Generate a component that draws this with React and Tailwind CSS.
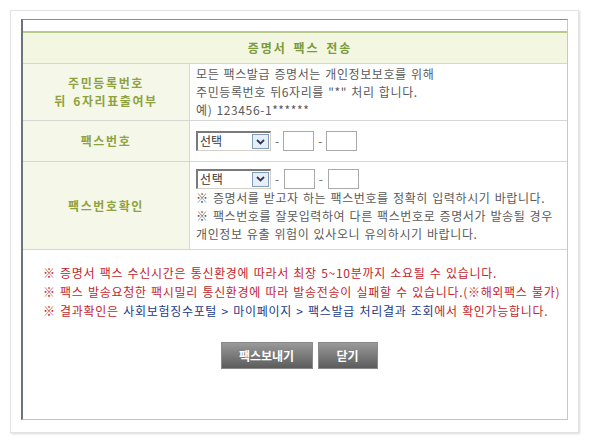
import React from 'react';

const FONT = { fontFamily: '"Noto Sans CJK KR", "Noto Sans", sans-serif' };

const FakeSelect = () => (
    <div className="flex h-[20px] w-[75px] items-stretch border-t-2 border-l-2 border-t-[#7a7a7a] border-l-[#7a7a7a] border-b border-r border-b-[#d4d0c8] border-r-[#d4d0c8] bg-white">
        <span className="flex-1 pl-[2px] text-[12px] leading-[16px] text-[#333]">선택</span>
        <span className="m-[1px] flex w-[17px] items-center justify-center border border-[#7f9db9] bg-[#e8eef7]">
            <svg width="9" height="6" viewBox="0 0 9 6">
                <path d="M1 1 L4.5 4.5 L8 1" stroke="#2b3a55" strokeWidth="1.8" fill="none" />
            </svg>
        </span>
    </div>
);

const Box = () => <div className="h-[20px] w-[31px] border border-[#a9a9a9] bg-white" />;

const Dash = () => <span className="px-[4px] text-[12px] text-[#666]">-</span>;

const Label = ({ children }) => (
    <div className="flex w-[167px] flex-col items-center justify-center border-r border-[#d6d6d6] bg-[#f5f8e8] text-center text-[12px] font-bold leading-[18px] tracking-[1.6px] text-[#8ea23f] [word-spacing:2px]">
        {children}
    </div>
);

const App = () => {
    return (
        <div className="min-h-[441px] w-[589px] bg-white pl-[10px] pt-[10px]" style={FONT}>
            <div className="h-[423px] w-[569px] border border-[#e3e3e3] pb-[12px] pl-[10px] pr-[10px] pt-[8px] shadow-[1px_1px_2px_rgba(0,0,0,0.15)]">
                <div className="flex h-[401px] w-[547px] flex-col border-b border-l-2 border-r border-t border-b-[#c4c4c4] border-l-[#6e727c] border-r-[#c8c8c8] border-t-[#888b93] bg-white">
                    <div className="h-[11px]" />
                    {/* header */}
                    <div className="flex h-[33px] items-center justify-center border-b border-t-2 border-b-[#d6d6d6] border-t-[#b9cb8c] bg-[#f3f7e2] pl-[10px] text-[12px] font-bold tracking-[2px] text-[#7b9a3c] [word-spacing:2px]">
                        증명서 팩스 전송
                    </div>

                    {/* row 1 */}
                    <div className="flex h-[57px] border-b border-[#d6d6d6]">
                        <Label>
                            <span>주민등록번호</span>
                            <span>뒤 6자리표출여부</span>
                        </Label>
                        <div className="flex flex-col justify-center pl-[6px] text-[12px] leading-[18px] tracking-[0.6px] text-[#5a5a5a] [word-spacing:1px]">
                            <span>모든 팩스발급 증명서는 개인정보보호를 위해</span>
                            <span>주민등록번호 뒤6자리를 "*" 처리 합니다.</span>
                            <span>예) 123456-1******</span>
                        </div>
                    </div>

                    {/* row 2 */}
                    <div className="flex h-[41px] border-b border-[#d6d6d6]">
                        <Label>팩스번호</Label>
                        <div className="flex items-center pl-[6px]">
                            <FakeSelect />
                            <Dash />
                            <Box />
                            <Dash />
                            <Box />
                        </div>
                    </div>

                    {/* row 3 */}
                    <div className="flex h-[88px] border-b border-[#d6d6d6]">
                        <Label>팩스번호확인</Label>
                        <div className="flex flex-col justify-center pl-[6px] text-[12px] leading-[18px] tracking-[0.6px] text-[#5a5a5a] [word-spacing:1px]">
                            <div className="flex items-center">
                                <FakeSelect />
                                <Dash />
                                <Box />
                                <Dash />
                                <Box />
                            </div>
                            <span>※ 증명서를 받고자 하는 팩스번호를 정확히 입력하시기 바랍니다.</span>
                            <span>※ 팩스번호를 잘못입력하여 다른 팩스번호로 증명서가 발송될 경우</span>
                            <span>개인정보 유출 위험이 있사오니 유의하시기 바랍니다.</span>
                        </div>
                    </div>

                    {/* notes */}
                    <div className="flex flex-col pl-[20px] pt-[13px] text-[12px] leading-[19px] tracking-[0.7px] text-[#c3262e] [word-spacing:1px]">
                        <span>※ 증명서 팩스 수신시간은 통신환경에 따라서 최장 5~10분까지 소요될 수 있습니다.</span>
                        <span>※ 팩스 발송요청한 팩시밀리 통신환경에 따라 발송전송이 실패할 수 있습니다.(※해외팩스 불가)</span>
                        <span>
                            ※ 결과확인은 <span className="text-[#1d3a8a]">사회보험징수포털 &gt; 마이페이지 &gt; 팩스발급 처리결과 조회</span>에서 확인가능합니다.
                        </span>
                    </div>

                    {/* buttons */}
                    <div className="flex justify-center gap-[5px] pl-[8px] pt-[22px]">
                        <button className="h-[27px] w-[92px] border border-[#8a8a8a] bg-gradient-to-b from-[#9a9a9a] to-[#5c5c5c] text-[12px] font-bold text-white">
                            팩스보내기
                        </button>
                        <button className="h-[27px] w-[60px] border border-[#8a8a8a] bg-gradient-to-b from-[#9a9a9a] to-[#5c5c5c] text-[12px] font-bold text-white">
                            닫기
                        </button>
                    </div>
                </div>
            </div>
        </div>
    );
};

export default App;
